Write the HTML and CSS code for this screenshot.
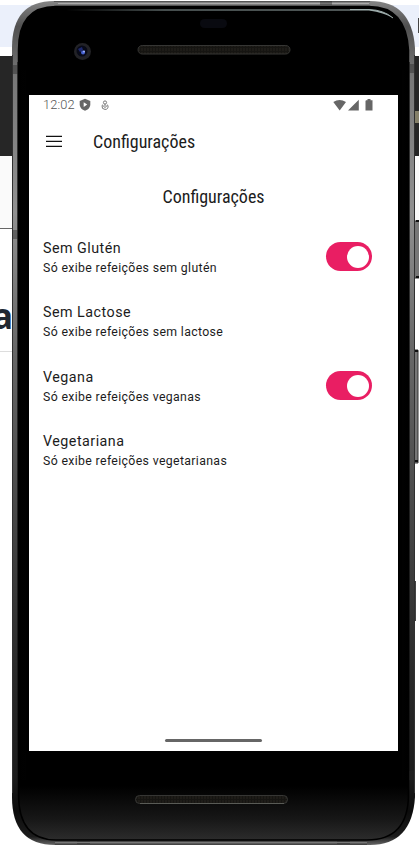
FILE: index.html
```html
<!DOCTYPE html>
<html lang="pt">
<head>
<meta charset="utf-8">
<title>Configurações</title>
<link rel="stylesheet" href="styles.css">
</head>
<body>
<div class="backdrop">
  <div class="tabs"><i></i></div>
  <div class="toolbar"><i></i></div>
  <div class="panel"></div>
  <div class="page"><span>a</span></div>
</div>
<main class="phone">
  <svg class="chassis" width="419" height="848" viewBox="0 0 419 848" aria-hidden="true">
    <defs>
      <linearGradient id="rim" x1="0" y1="0" x2="0" y2="1">
        <stop offset="0" stop-color="#858585"/><stop offset=".03" stop-color="#505050"/><stop offset=".09" stop-color="#777"/><stop offset=".25" stop-color="#909090"/>
        <stop offset=".42" stop-color="#666"/><stop offset=".6" stop-color="#484848"/><stop offset=".8" stop-color="#292929"/><stop offset=".92" stop-color="#1c1c1c"/><stop offset=".96" stop-color="#0c0c0c"/><stop offset=".99" stop-color="#1c1c1c"/><stop offset="1" stop-color="#666"/>
      </linearGradient>
      <linearGradient id="glass" x1="0" y1="0" x2="0" y2="1">
        <stop offset="0"/><stop offset=".935"/><stop offset=".975" stop-color="#171717"/><stop offset="1" stop-color="#2c2c2c"/>
      </linearGradient>
      <linearGradient id="shine">
        <stop offset="0" stop-color="#8b9b9b" stop-opacity="0"/><stop offset=".3" stop-color="#8b9b9b"/><stop offset="1" stop-color="#a0afae"/>
      </linearGradient>
      <linearGradient id="edge">
        <stop offset="0"/><stop offset=".35" stop-color="#171717"/><stop offset=".65" stop-color="#1b1b1b"/><stop offset="1"/>
      </linearGradient>
      <pattern id="mesh" width="3" height="4" patternUnits="userSpaceOnUse"><rect width="3" height="4" fill="#161512"/><path d="M1 0v3" stroke="#26231e"/></pattern>
    </defs>
    <g fill="#777" stroke="#333">
      <path d="M414 221h6v57h-6zM414 350h4v113h-4z"/>
      <path d="M413 581h3v40h-3zM413 783h2v9h-2z" fill="#444" stroke="none"/>
    </g>
    <path d="M416 221h3M416 277h3M415 351h3M415 461h3" stroke="#111" stroke-width="2"/>
    <path d="M54 1H370Q412 1 415 48V797Q412 845 370 845H55Q12 845 12 797V48Q12 1 54 1Z" fill="url(#rim)"/>
    <path d="M54 1.500H370" stroke="#555"/><path d="M58 3.500H369" stroke="#aaa"/><path d="M54 5.500H370" stroke="#707070"/>
    <path d="M12.500 55V793M414.500 55V793" stroke="#303030"/><path d="M17.500 62V780M409.500 62V780" stroke="#1b1b1b" stroke-opacity=".65"/>
    <path d="M56 6.500H369Q406 6.500 408.500 50V794Q408.500 840 367 840H56Q18.500 840 18.500 794V50Q18.500 6.500 56 6.500Z" fill="url(#glass)" stroke="#000" stroke-width="1.500"/>
    <path d="M20 70H26V780H20zM402 70H408V780H402z" fill="url(#edge)"/>
    <path d="M66 9.500H369Q384 10 393 18Q384 12.500 369 10.500H66Z" fill="url(#shine)"/>
    <path d="M350 9.500H369Q384 10 393 18" fill="none" stroke="#a0afae"/>
    <path d="M13 65h5v9h-5zM409 64h5v9h-5zM320 1h12v4h-12zM13 230h5v9h-5zM409 771h5v9h-5zM77 841h13v4h-13zM337 841h13v4h-13z" fill="#222" fill-opacity=".4"/>
    <path d="M55 842.500H367" stroke="#777"/><path d="M55 844.500H367" stroke="#444"/>
    <circle cx="82.500" cy="51.500" r="8.500" fill="#222226"/><circle cx="82" cy="51" r="5.500" fill="#080a18"/>
    <path d="M78 49l4-2 1 3-3 2z" fill="#1d286e"/><circle cx="83" cy="52.500" r="2" fill="#4661cf"/><circle cx="84" cy="51.500" r="1" fill="#a0b4ff"/>
    <rect x="200" y="19" width="27" height="9" rx="4.500" fill="#090a10"/>
    <g fill="url(#mesh)" stroke="#363634"><rect x="138" y="45.500" width="152" height="8.500" rx="4.200"/><rect x="135.500" y="795.500" width="152" height="8" rx="4"/></g>
    <path d="M140 803.500H284" stroke="#595b56"/>
  </svg>
  <section class="screen">
    <header class="status">
      <span class="clock">12:02</span>
      <svg class="shield" width="12" height="14" viewBox="0 0 12 14"><path d="M6 .8L11.300 3v3.500C11.300 9.500 8.900 11.800 6 12.800 3.100 11.800 .7 9.500 .7 6.500V3z" fill="#666"/><path d="M4.700 4.300v4.600L8.200 6.600z" fill="#fff"/></svg>
      <svg class="mic" width="8" height="11" viewBox="0 0 8 11" fill="none" stroke="#777"><circle cx="4" cy="2.500" r="1.600"/><path d="M1 4.700L4 7.500 7 4.700M1 5.500Q.5 9.300 4 9.400T7 5.500M3 5h2"/></svg>
      <svg class="signals" width="40" height="13" viewBox="0 0 40 13" fill="#666"><path d="M.3 3Q6.500-1.200 13 3L6.700 11.500zM25.800.8V11.500H15zM33 1.200h1.500V0h3v1.200H39.500V11.500h-7V2z"/></svg>
    </header>
    <nav class="appbar">
      <svg width="16" height="12" viewBox="0 0 16 12" stroke="#111" stroke-width="1.200"><path d="M0 1.400h16M0 6.400h16M0 11.300h16"/></svg>
      <h1>Configurações</h1>
    </nav>
    <h2>Configurações</h2>
    <div class="settings">
      <div class="row"><div><h3>Sem Glutén</h3><p>Só exibe refeições sem glutén</p></div><span class="switch"><i></i></span></div>
      <div class="row"><div><h3>Sem Lactose</h3><p>Só exibe refeições sem lactose</p></div></div>
      <div class="row"><div><h3>Vegana</h3><p>Só exibe refeições veganas</p></div><span class="switch"><i></i></span></div>
      <div class="row"><div><h3>Vegetariana</h3><p>Só exibe refeições vegetarianas</p></div></div>
    </div>
    <div class="home"></div>
  </section>
</main>
</body>
</html>
```
FILE: styles.css
```css
* { box-sizing: border-box; margin: 0; padding: 0; }
body { width: 419px; height: 848px; overflow: hidden; background: #fff; font-family: Roboto, sans-serif; position: relative; }
.backdrop { position: absolute; inset: 0; padding-top: 5px; }
.tabs { height: 42px; background: #ebf0fb; margin-bottom: 9px; padding-top: 13px; }
.tabs i { display: block; width: 1px; height: 15px; margin-left: auto; background: #444; }
.toolbar { height: 100px; background: #262626; padding-top: 55px; }
.toolbar i { display: block; width: 5px; height: 12px; margin-left: auto; background: #858069; }
.panel { height: 73px; background: #fafafa; border-bottom: 1px solid #666; }
.page { height: 123px; padding-top: 65px; border-bottom: 1px solid #ddd; overflow: hidden; }
.page span { display: block; margin-left: -8px; font: bold 35px/44px "Open Sans", sans-serif; color: #202832; }
.phone { position: relative; width: 419px; height: 848px; padding: 95px 21px 97px 29px; }
.chassis { position: absolute; left: 0; top: 0; }
.screen { position: relative; height: 656px; background: #fff; display: flex; flex-direction: column; color: #1c1c1c; }
.status { height: 20px; display: flex; align-items: center; padding: 0 25px 0 14px; }
.clock { font-size: 12.800px; font-weight: 300; line-height: 20px; color: #555; width: 32px; letter-spacing: .1px; white-space: nowrap; }
.shield { margin-left: 4px; }
.mic { margin-left: 10px; }
.signals { margin-left: auto; }
.appbar { height: 54px; display: flex; align-items: center; padding: 0 17px 1px; gap: 32px; }
.appbar svg { margin-top: -1px; }
h1, h2 { font: 400 18px/24px "Roboto Condensed", Roboto, sans-serif; font-stretch: 75%; letter-spacing: 0; }
h1 { margin-top: 1px; margin-left: -1px; }
h2 { margin-top: 15.500px; text-align: center; }
.settings { margin-top: 28px; padding: 0 26px 0 14px; }
.row { height: 64.600px; display: flex; justify-content: space-between; align-items: flex-start; }
h3 { font-size: 14.300px; line-height: 22px; font-weight: 400; letter-spacing: .48px; white-space: nowrap; }
p { font-size: 12.300px; line-height: 19px; letter-spacing: .35px; white-space: nowrap; }
.switch { width: 46.500px; height: 29px; margin-top: 5.500px; border-radius: 15px; background: #e91e63; padding: 3.500px; display: flex; justify-content: flex-end; }
.switch i { width: 22px; height: 22px; border-radius: 50%; background: #fff; }
.home { width: 97px; height: 3px; border-radius: 2px; background: #666; margin: auto auto 9px; }
```
